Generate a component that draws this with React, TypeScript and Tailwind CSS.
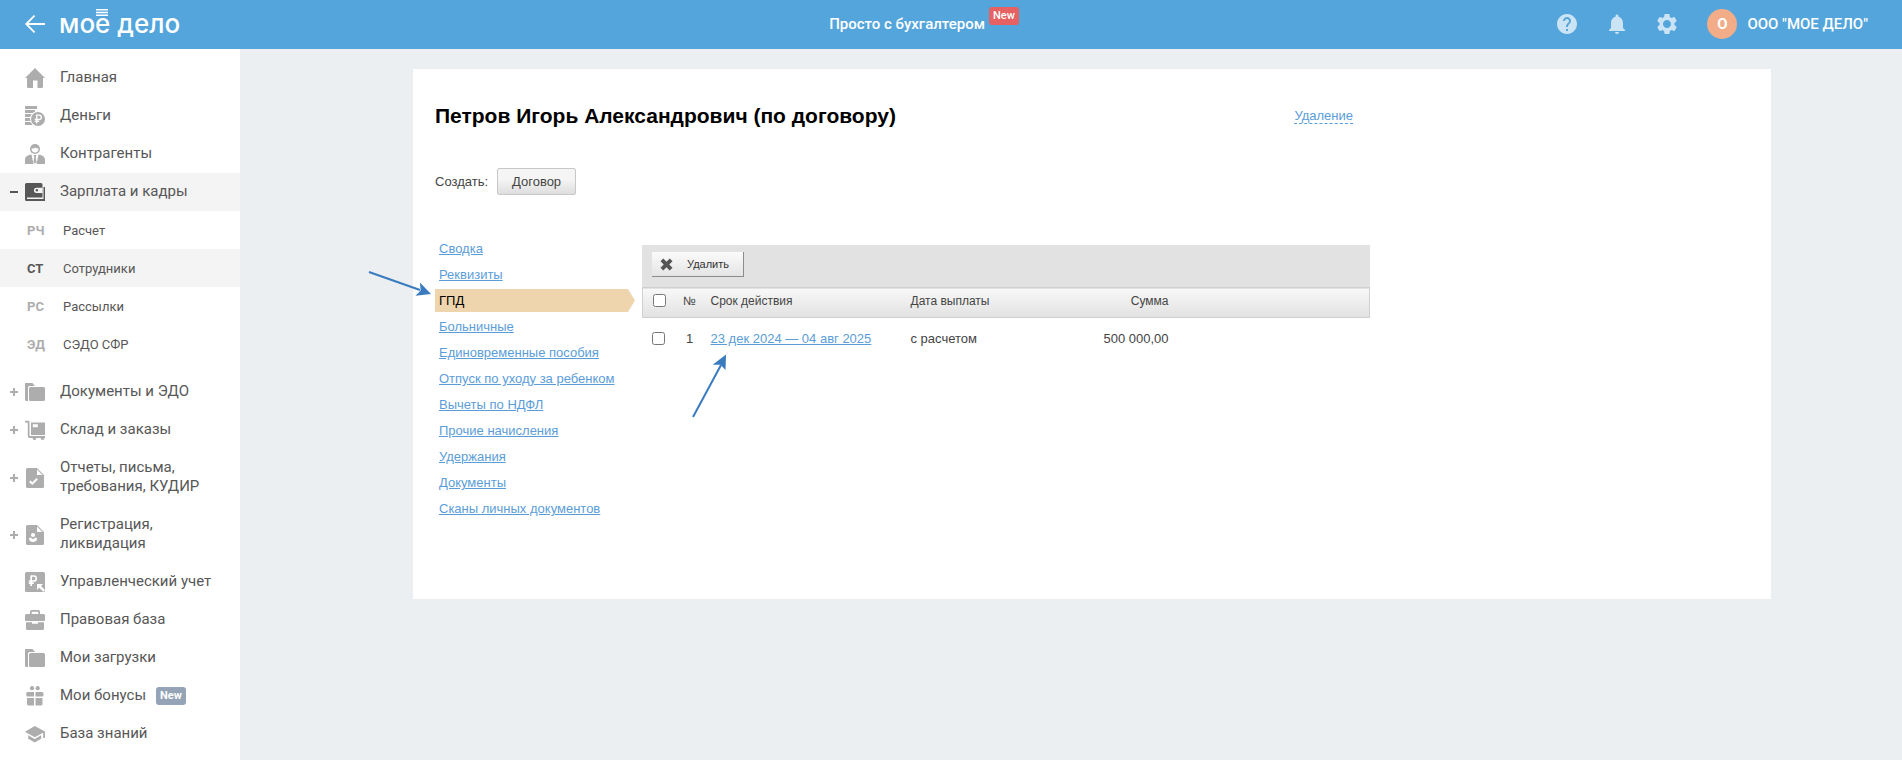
import type { ReactNode } from "react";

const HomeIcon = () => (
  <svg viewBox="0 0 20 20" className="h-5 w-5" fill="currentColor">
    <path d="M10 0 20 10H18V18.500a1.500 1.500 0 0 1-1.500 1.500H12.500v-7.500H8V20H3.500A1.500 1.500 0 0 1 2 18.500V10H0Z" />
  </svg>
);

const MoneyIcon = () => (
  <svg viewBox="0 0 20 20" className="h-5 w-5" fill="currentColor">
    <path d="M0 0h12v3H0zM0 4h10v3H0zM0 8h8v3H0zM0 12h6v3H0zM0 16h8v3H0z" />
    <circle cx="13" cy="13" r="8" fill="#fff" />
    <circle cx="13" cy="13" r="7" />
    <path d="M11.700 17.500V9.200h2.500a2.100 2.100 0 0 1 0 4.300H9.800M9.800 15.400h4.400" fill="none" stroke="#fff" strokeWidth="1.300" />
  </svg>
);

const PersonIcon = () => (
  <svg viewBox="0 0 20 20" className="h-5 w-5" fill="currentColor">
    <circle cx="10" cy="5" r="5" />
    <path d="M6.500 4.600c1.600.1 2.800-.4 3.700-1.100.8.700 1.900 1.100 3.300 1.100 0 2.400-1.500 4-3.500 4s-3.500-1.600-3.500-4Z" fill="#fff" />
    <path d="M0 20v-4.500C0 12.500 3.300 11 6.500 10.500L8.500 20ZM20 20v-4.500c0-3-3.300-4.500-6.500-5L11.500 20ZM8.600 11h2.800l-.7 2 .8 5-1.500 1.700L8.500 18l.8-5Z" />
  </svg>
);

const WalletIcon = () => (
  <svg viewBox="0 0 20 20" className="h-5 w-5" fill="currentColor">
    <path d="M1.500 1H16a1.500 1.500 0 0 1 1.500 1.500V15.500H2V17H18.500V5H20V19H1.500A1.500 1.500 0 0 1 0 17.500v-15A1.500 1.500 0 0 1 1.500 1Z" />
    <path d="M11.500 5.700h6v5.200h-6a2.600 2.600 0 0 1 0-5.200Z" fill="#f4f4f4" />
    <circle cx="11.900" cy="8.300" r="1.200" />
  </svg>
);

const FolderIcon = () => (
  <svg viewBox="0 0 20 20" className="h-5 w-5" fill="currentColor">
    <path d="M0 1h7.500l2.500 3H4.500A1.500 1.500 0 0 0 3 5.500V19H1.500A1.500 1.500 0 0 1 0 17.500Z" />
    <path d="M5.500 5h13A1.500 1.500 0 0 1 20 6.500v11a1.500 1.500 0 0 1-1.500 1.500h-13A1.500 1.500 0 0 1 4 17.500v-11A1.500 1.500 0 0 1 5.500 5Z" />
  </svg>
);

const CartIcon = () => (
  <svg viewBox="0 0 20 20" className="h-5 w-5" fill="currentColor">
    <path d="M0 .7h3.300A1.200 1.200 0 0 1 4.500 2v14H20v2H4.500A1.700 1.700 0 0 1 2.800 16.300V2.400H0Z" />
    <path fillRule="evenodd" d="M6 2.500h14V15H6ZM7.800 4.300v3h5v-3Z" />
    <circle cx="9.500" cy="18" r="1.900" />
    <circle cx="17.500" cy="18" r="1.900" />
  </svg>
);

const DocCheckIcon = () => (
  <svg viewBox="0 0 20 20" className="h-5 w-5" fill="currentColor">
    <path d="M2.500 0H12l7 7v11.500a1.500 1.500 0 0 1-1.500 1.500h-15A1.500 1.500 0 0 1 1 18.500v-17A1.500 1.500 0 0 1 2.500 0Z" />
    <path d="M12 1.500V7h5.500Z" fill="#fff" />
    <path d="m4.800 13.200 2.500 2.500 4.900-5" fill="none" stroke="#fff" strokeWidth="2" />
  </svg>
);

const DocPersonIcon = () => (
  <svg viewBox="0 0 20 20" className="h-5 w-5" fill="currentColor">
    <path d="M2.500 0H12l7 7v11.500a1.500 1.500 0 0 1-1.500 1.500h-15A1.500 1.500 0 0 1 1 18.500v-17A1.500 1.500 0 0 1 2.500 0Z" />
    <path d="M12 1.500V7h5.500Z" fill="#fff" />
    <circle cx="8" cy="10" r="2.100" fill="#fff" />
    <path d="M4 14c0-1 .7-1.600 1.500-1.600L8 14.300l2.500-1.900c.8 0 1.500.6 1.500 1.600 0 1.600-1.500 3-4 3s-4-1.400-4-3Z" fill="#fff" />
  </svg>
);

const RubleIcon = () => (
  <svg viewBox="0 0 20 20" className="h-5 w-5" fill="currentColor">
    <rect width="20" height="20" rx="1.500" />
    <path d="M6.200 14V4h2.600a2.400 2.400 0 0 1 0 5H3.800M3.800 11.200h5" fill="none" stroke="#fff" strokeWidth="1.700" />
    <path d="M12 12h6l-2 2 4 4-1.700 1.700-4.100-4L12 18Z" fill="#fff" />
  </svg>
);

const BriefcaseIcon = () => (
  <svg viewBox="0 0 20 20" className="h-5 w-5" fill="currentColor">
    <path fillRule="evenodd" d="M5 4V1.500A1.500 1.500 0 0 1 6.500 0h7A1.500 1.500 0 0 1 15 1.500V4h3.500A1.500 1.500 0 0 1 20 5.500V10a1 1 0 0 1-1 1H1a1 1 0 0 1-1-1V5.500A1.500 1.500 0 0 1 1.500 4Zm1.700 0h6.600V1.700H6.700Z" />
    <path d="M1 12.200h6v1.600h6v-1.600h6v6.300a1.500 1.500 0 0 1-1.500 1.500h-15A1.500 1.500 0 0 1 1 18.500Z" />
  </svg>
);

const GiftIcon = () => (
  <svg viewBox="0 0 20 20" className="h-5 w-5" fill="currentColor">
    <circle cx="7" cy="2.200" r="2.100" />
    <circle cx="12.700" cy="2.200" r="2.100" />
    <path d="M2.700 6H9v4.500H2.700a1.500 1.500 0 0 1-1.500-1.500V7.500A1.500 1.500 0 0 1 2.700 6ZM10.500 6H17a1.500 1.500 0 0 1 1.500 1.500V9a1.500 1.500 0 0 1-1.500 1.500h-6.500ZM2 12h7v7.500H3.500A1.500 1.500 0 0 1 2 18ZM10.500 12h7v6a1.500 1.500 0 0 1-1.500 1.500h-5.500Z" />
  </svg>
);

const GraduationIcon = () => (
  <svg viewBox="0 0 20 20" className="h-5 w-5" fill="currentColor">
    <path d="m9.700 2 10.300 5.500V14h-1.800V8.700l-8.500 4.600L0 7.700Z" />
    <path d="m3.200 11.200 6.500 3.700 6.500-3.700v3.600l-6.500 3.800-6.500-3.800Z" />
  </svg>
);

const HelpIcon = () => (
  <svg viewBox="2 2 20 20" className="h-5 w-5" fill="currentColor">
    <path d="M12 2C6.480 2 2 6.480 2 12s4.480 10 10 10 10-4.480 10-10S17.520 2 12 2zm1 17h-2v-2h2v2zm2.070-7.750-.9.920C13.450 12.900 13 13.500 13 15h-2v-.5c0-1.100.45-2.100 1.170-2.830l1.240-1.260c.37-.36.590-.86.590-1.410 0-1.100-.9-2-2-2s-2 .9-2 2H8c0-2.210 1.790-4 4-4s4 1.790 4 4c0 .88-.36 1.680-.93 2.250z" />
  </svg>
);

const BellIcon = () => (
  <svg viewBox="2 2 20 20" className="h-5 w-5" fill="currentColor">
    <path d="M12 22c1.100 0 2-.9 2-2h-4c0 1.100.89 2 2 2zm6-6v-5c0-3.070-1.640-5.640-4.500-6.320V4c0-.83-.67-1.500-1.500-1.500s-1.500.67-1.500 1.500v.68C7.630 5.360 6 7.920 6 11v5l-2 2v1h16v-1l-2-2z" />
  </svg>
);

const GearIcon = () => (
  <svg viewBox="2 2 20 20" className="h-5 w-5" fill="currentColor">
    <path d="M19.430 12.980c.04-.32.070-.64.070-.98s-.03-.66-.07-.98l2.110-1.650c.19-.15.240-.42.120-.64l-2-3.460c-.12-.22-.39-.3-.61-.22l-2.490 1c-.52-.4-1.080-.73-1.690-.98l-.38-2.650C14.460 2.180 14.250 2 14 2h-4c-.25 0-.46.180-.49.420l-.38 2.650c-.61.250-1.170.59-1.690.98l-2.490-1c-.23-.09-.49 0-.61.220l-2 3.460c-.13.220-.07.490.12.640l2.110 1.650c-.04.320-.07.650-.07.980s.03.660.070.980l-2.110 1.650c-.19.150-.24.420-.12.640l2 3.460c.12.220.39.300.61.220l2.490-1c.52.400 1.080.730 1.690.980l.38 2.650c.03.240.24.420.49.420h4c.25 0 .46-.18.490-.42l.38-2.650c.61-.25 1.170-.59 1.690-.98l2.490 1c.23.090.49 0 .61-.22l2-3.460c.12-.22.070-.49-.12-.64l-2.110-1.650zM12 16c-2.210 0-4-1.790-4-4s1.790-4 4-4 4 1.790 4 4-1.790 4-4 4z" />
  </svg>
);

type NavRowProps = {
  icon: ReactNode;
  label: string;
  toggle?: "plus" | "minus";
  active?: boolean;
  badge?: string;
};

function NavRow({ icon, label, toggle, active, badge }: NavRowProps) {
  return (
    <a
      href="#"
      className={
        "flex items-center py-[9px] pr-4 text-[15px] leading-[19px] text-[#575757] " +
        (active ? "bg-[#f4f4f4]" : "")
      }
    >
      <span className={"flex w-[25px] shrink-0 justify-end pr-[7px] " + (active ? "text-[#575757]" : "text-[#adadad]")}>
        {toggle && (
          <svg viewBox="0 0 8 8" className="h-2 w-2" fill="currentColor">
            <path d={toggle === "plus" ? "M3 0h2v3h3v2H5v3H3V5H0V3h3z" : "M0 3h8v2H0z"} />
          </svg>
        )}
      </span>
      <span className={"shrink-0 " + (active ? "text-[#575757]" : "text-[#adadad]")}>{icon}</span>
      <span className="ml-[15px] pb-px">{label}</span>
      {badge && (
        <span className="ml-[10px] rounded-[3px] bg-[#94a3b5] px-1 text-[11px] font-bold leading-[18px] text-white">
          {badge}
        </span>
      )}
    </a>
  );
}

function SubRow({ code, label, active }: { code: string; label: string; active?: boolean }) {
  return (
    <a
      href="#"
      className={"flex h-[38px] items-center pl-[27px] pt-0.5 text-[13px] text-[#575757] " + (active ? "bg-[#f4f4f4]" : "")}
    >
      <span className={"w-9 font-bold " + (active ? "text-[#575757]" : "text-[#adadad]")}>{code}</span>
      <span>{label}</span>
    </a>
  );
}

const tabs = [
  "Сводка",
  "Реквизиты",
  "ГПД",
  "Больничные",
  "Единовременные пособия",
  "Отпуск по уходу за ребенком",
  "Вычеты по НДФЛ",
  "Прочие начисления",
  "Удержания",
  "Документы",
  "Сканы личных документов",
];

function Header() {
  return (
    <header className="grid h-[49px] grid-cols-[1fr_auto_1fr] items-center bg-[#53a5dc] pb-px text-[15px] font-medium text-white">
      <a href="#" aria-label="Назад" className="flex items-center pl-[25px]">
        <svg viewBox="0 0 20 18" className="h-[18px] w-5" fill="none" stroke="currentColor" strokeWidth="1.800">
          <path d="M20 9H1.500M9.500.7 1.200 9l8.300 8.300" />
        </svg>
        <span className="relative ml-[14px] whitespace-nowrap font-[Inter] text-[26px] leading-[30px]">
          мое дело
          <svg viewBox="0 0 12 7" className="absolute left-[37px] top-0 h-[7px] w-3" fill="currentColor">
            <path d="M0 0h12v1.400H0zM0 2.800h12v1.400H0zM0 5.600h12V7H0z" />
          </svg>
        </span>
      </a>
      <a href="#" className="flex items-start pr-[54px]">
        <span className="leading-[18px]">Просто с бухгалтером</span>
        <span className="-mt-2 ml-1 rounded-[3px] bg-[#e66262] px-1 text-[11px] leading-[18px]">New</span>
      </a>
      <div className="flex items-center justify-end gap-[30px] pr-[34px]">
        <button aria-label="Помощь" className="text-[#cbe4f5]"><HelpIcon /></button>
        <button aria-label="Уведомления" className="text-[#cbe4f5]"><BellIcon /></button>
        <button aria-label="Настройки" className="text-[#cbe4f5]"><GearIcon /></button>
        <button className="flex items-center gap-[10px] whitespace-nowrap">
          <span className="flex h-[30px] w-[30px] items-center justify-center rounded-full bg-[#f2ac87] font-bold">О</span>
          ООО "МОЕ ДЕЛО"
        </button>
      </div>
    </header>
  );
}

function Sidebar() {
  return (
    <nav className="w-60 shrink-0 bg-white pt-[10px]">
      <NavRow icon={<HomeIcon />} label="Главная" />
      <NavRow icon={<MoneyIcon />} label="Деньги" />
      <NavRow icon={<PersonIcon />} label="Контрагенты" />
      <NavRow icon={<WalletIcon />} label="Зарплата и кадры" toggle="minus" active />
      <div className="mb-[10px]">
        <SubRow code="РЧ" label="Расчет" />
        <SubRow code="СТ" label="Сотрудники" active />
        <SubRow code="РС" label="Рассылки" />
        <SubRow code="ЭД" label="СЭДО СФР" />
      </div>
      <NavRow icon={<FolderIcon />} label="Документы и ЭДО" toggle="plus" />
      <NavRow icon={<CartIcon />} label="Склад и заказы" toggle="plus" />
      <NavRow icon={<DocCheckIcon />} label="Отчеты, письма, требования, КУДИР" toggle="plus" />
      <NavRow icon={<DocPersonIcon />} label="Регистрация, ликвидация" toggle="plus" />
      <NavRow icon={<RubleIcon />} label="Управленческий учет" />
      <NavRow icon={<BriefcaseIcon />} label="Правовая база" />
      <NavRow icon={<FolderIcon />} label="Мои загрузки" />
      <NavRow icon={<GiftIcon />} label="Мои бонусы" badge="New" />
      <NavRow icon={<GraduationIcon />} label="База знаний" />
    </nav>
  );
}

function Tabs() {
  return (
    <ul className="flex w-[200px] shrink-0 flex-col gap-[3px]">
      {tabs.map((tab) =>
        tab === "ГПД" ? (
          <li
            key={tab}
            className="h-[23px] bg-[#eed5ad] pl-1 leading-[23px] text-black [clip-path:polygon(0_0,193px_0,100%_50%,193px_100%,0_100%)]"
          >
            {tab}
          </li>
        ) : (
          <li key={tab} className="h-[23px] whitespace-nowrap pl-1 leading-[23px]">
            <a href="#" className="text-[#5b9dd9] underline">{tab}</a>
          </li>
        ),
      )}
    </ul>
  );
}

function Contracts() {
  return (
    <div className="mt-2 min-w-0 flex-1">
      <div className="flex h-[42px] items-start bg-[#e2e2e2] pl-[10px] pt-[7px]">
        <button className="flex h-[25px] items-center border-b border-r border-[#8c8c8c] bg-linear-to-b from-[#fbfbfb] to-[#e4e4e4] pl-2 pr-[14px] text-[11px] text-[#333]">
          <svg viewBox="0 0 13 13" className="mr-[14px] h-[13px] w-[13px]" fill="#555">
            <path d="M3.300.5 6.500 3.700 9.700.5l2.800 2.800-3.200 3.200 3.200 3.200-2.800 2.800-3.200-3.200-3.200 3.200L.5 9.700l3.200-3.200L.5 3.300Z" />
          </svg>
          Удалить
        </button>
      </div>
      <table className="w-full table-fixed border-collapse text-[#444]">
        <colgroup>
          <col className="w-[34px]" />
          <col className="w-[26px]" />
          <col className="w-[200px]" />
          <col className="w-[200px]" />
          <col className="w-[66px]" />
          <col />
        </colgroup>
        <thead>
          <tr className="h-[30px] border border-[#d0d0d0] bg-linear-to-b from-[#f8f8f8] to-[#e2e2e2] text-xs [&>th]:pb-1 [&>th]:font-normal">
            <th className="pl-[10px] text-left">
              <input type="checkbox" aria-label="Выбрать все" className="block h-[13px] w-[13px]" />
            </th>
            <th>№</th>
            <th className="pl-2 text-left">Срок действия</th>
            <th className="pl-2 text-left">Дата выплаты</th>
            <th className="text-right">Сумма</th>
            <th />
          </tr>
        </thead>
        <tbody>
          <tr className="h-[42px] text-[13px]">
            <td className="pl-[9px]">
              <input type="checkbox" aria-label="Выбрать договор 1" className="block h-[13px] w-[13px]" />
            </td>
            <td className="text-center">1</td>
            <td className="pl-2">
              <a href="#" className="whitespace-nowrap text-[#5b9dd9] underline">23 дек 2024 — 04 авг 2025</a>
            </td>
            <td className="pl-2">с расчетом</td>
            <td className="whitespace-nowrap text-right">500 000,00</td>
            <td />
          </tr>
        </tbody>
      </table>
    </div>
  );
}

export default function App() {
  return (
    <div className="flex min-h-screen flex-col bg-[#ebeff2] font-[Roboto,sans-serif]">
      <Header />
      <div className="flex flex-1">
        <Sidebar />
        <main className="min-w-0 flex-1 pl-[173px] pr-[131px] pt-5 font-['Liberation_Sans',Arial,sans-serif] text-[13px]">
          <section className="relative bg-white px-[22px] pb-[79px] pt-[35px]">
            <div className="max-w-[935px]">
              <div className="flex items-center justify-between pr-[17px]">
                <h1 className="text-[21px] font-bold leading-6 text-black">Петров Игорь Александрович (по договору)</h1>
                <a href="#" className="border-b border-dashed border-[#5b9dd9] leading-[15px] text-[#5b9dd9]">Удаление</a>
              </div>
              <div className="mt-10 flex items-center gap-[9px] text-[#444]">
                <span>Создать:</span>
                <button className="h-[27px] rounded-[2px] border border-[#c8c8c8] bg-linear-to-b from-[#f5f5f5] from-40% to-[#dedede] px-[14px]">
                  Договор
                </button>
              </div>
              <div className="mt-[42px] flex gap-[7px]">
                <Tabs />
                <Contracts />
              </div>
            </div>
            <svg viewBox="0 0 64 28" className="absolute -left-[45px] top-[201px] h-7 w-16" fill="#3a7abf">
              <path d="M1 2 52 20" stroke="#3a7abf" strokeWidth="2" />
              <path d="m63 24-15.500 1.800 5.200-5.200-.8-8Z" />
            </svg>
            <svg viewBox="0 0 36 64" className="absolute left-[278px] top-[285px] h-16 w-9" fill="#3a7abf">
              <path d="M2 63 30 11" stroke="#3a7abf" strokeWidth="2" />
              <path d="m35 .5-.5 15.500-5-5.200-7.800 0Z" />
            </svg>
          </section>
        </main>
      </div>
    </div>
  );
}
